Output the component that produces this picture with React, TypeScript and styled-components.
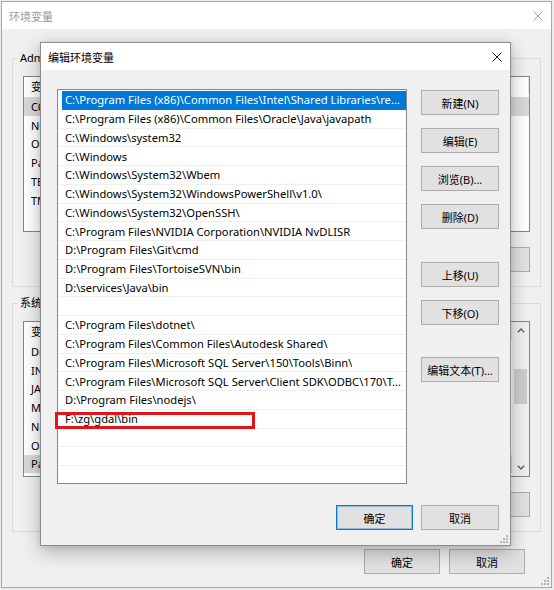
import React from "react";
import styled, { createGlobalStyle, css } from "styled-components";

const FONT = `"Noto Sans", "Noto Sans CJK SC", sans-serif`;

const GlobalStyle = createGlobalStyle`
  *, *::before, *::after { box-sizing: border-box; }
  html, body { margin: 0; padding: 0; }
  body {
    background: #ececec;
    font-family: ${FONT};
    font-size: 11px;
    color: #000;
  }
`;

const Desktop = styled.div`
  position: relative;
  width: 554px;
  height: 590px;
  overflow: hidden;
  background: #ececec;
`;

const WindowFrame = styled.div`
  position: absolute;
  display: flex;
  flex-direction: column;
  background: #f0f0f0;
`;

const BackWindow = styled(WindowFrame)`
  left: 1px;
  top: 1px;
  width: 551px;
  height: 587px;
  border: 1px solid #a8a8a8;
`;

const EditDialog = styled(WindowFrame)`
  left: 40px;
  top: 42px;
  width: 471px;
  height: 504px;
  border: 1px solid #8e8e8e;
  box-shadow: 0 6px 18px rgba(0, 0, 0, 0.28), 0 0 4px rgba(0, 0, 0, 0.1);
`;

const TitleBar = styled.div<{ $inactive?: boolean }>`
  flex: none;
  height: 27px;
  background: #fff;
  display: flex;
  align-items: center;
  justify-content: space-between;
  padding: 0 8px 0 7px;
  color: ${(p) => (p.$inactive ? "#9a9a9a" : "#000")};
  font-size: 11px;
`;

const CloseIcon = ({ color }: { color: string }) => (
  <svg width="10" height="10" viewBox="0 0 10 10">
    <path d="M0.5 0.5 L9.5 9.5 M9.5 0.5 L0.5 9.5" stroke={color} strokeWidth="1" fill="none" />
  </svg>
);

const Grip = styled.svg`
  position: absolute;
  right: 2px;
  bottom: 2px;
`;

const SizeGrip = () => (
  <Grip width="8" height="8" viewBox="0 0 8 8">
    {[
      [6, 0],
      [3, 3],
      [6, 3],
      [0, 6],
      [3, 6],
      [6, 6],
    ].map(([x, y]) => (
      <rect key={`${x}-${y}`} x={x} y={y} width="2" height="2" fill="#b4b4b4" />
    ))}
  </Grip>
);

/* ---------- buttons ---------- */

const Button = styled.button<{ $w?: number; $primary?: boolean; $gapBefore?: number }>`
  flex: none;
  width: ${(p) => p.$w ?? 78}px;
  height: 25px;
  margin: ${(p) => (p.$gapBefore ? `${p.$gapBefore}px 0 0 0` : 0)};
  padding: 0;
  background: #e1e1e1;
  border: 1px solid #adadad;
  font-family: ${FONT};
  font-size: 11px;
  color: #000;
  ${(p) =>
    p.$primary &&
    css`
      border-color: #0078d7;
      box-shadow: inset 0 0 0 1px rgba(0, 120, 215, 0.35);
    `}
`;

/* ---------- background window ---------- */

const BackBody = styled.div`
  flex: 1;
  display: flex;
  flex-direction: column;
  padding: 21px 10px 14px 10px;
`;

const GroupBox = styled.fieldset`
  margin: 0;
  min-width: 0;
  padding: 0 10px 14px 10px;
  border: 1px solid #dcdcdc;
  & + & {
    margin-top: 8px;
  }
`;

const GroupLegend = styled.legend`
  padding: 0 2px;
  margin-left: -5px;
  line-height: 16px;
  font-size: 11px;
`;

const VarList = styled.div`
  margin-top: 10px;
  height: 156px;
  background: #fff;
  border: 1px solid #828790;
  display: flex;
  overflow: hidden;
`;

const VarColumns = styled.div`
  flex: 1;
  display: flex;
  flex-direction: column;
  min-width: 0;
`;

const VarHeader = styled.div`
  flex: none;
  height: 20px;
  display: flex;
  align-items: center;
  padding-bottom: 3px;
`;

const HeaderCell = styled.div<{ $w?: number }>`
  width: ${(p) => (p.$w ? `${p.$w}px` : "auto")};
  flex: ${(p) => (p.$w ? "none" : "1")};
  padding-left: 7px;
  border-right: 1px solid #e5e5e5;
`;

const VarRow = styled.div<{ $selected?: boolean }>`
  flex: none;
  height: 18.75px;
  display: flex;
  align-items: center;
  background: ${(p) => (p.$selected ? "#d9d9d9" : "transparent")};
`;

const VarCell = styled.div<{ $w?: number }>`
  width: ${(p) => (p.$w ? `${p.$w}px` : "auto")};
  flex: ${(p) => (p.$w ? "none" : "1")};
  padding-left: 7px;
  white-space: nowrap;
  overflow: hidden;
  text-overflow: ellipsis;
`;

const Scrollbar = styled.div`
  flex: none;
  width: 17px;
  background: #f0f0f0;
  display: flex;
  flex-direction: column;
`;

const ScrollArrow = styled.div`
  flex: none;
  height: 17px;
  display: flex;
  align-items: center;
  justify-content: center;
`;

const ScrollTrack = styled.div`
  flex: 1;
  padding: 30px 2px 0 2px;
`;

const ScrollThumb = styled.div`
  height: 35px;
  background: #cdcdcd;
`;

const Chevron = ({ up }: { up?: boolean }) => (
  <svg width="8" height="5" viewBox="0 0 8 5">
    <path
      d={up ? "M0.8 4.3 L4 1.1 L7.2 4.3" : "M0.8 0.7 L4 3.9 L7.2 0.7"}
      stroke="#606060"
      strokeWidth="1.4"
      fill="none"
    />
  </svg>
);

const GroupButtons = styled.div`
  display: flex;
  justify-content: flex-end;
  gap: 8px;
  margin-top: 15px;
`;

const BackFooter = styled.div`
  display: flex;
  justify-content: flex-end;
  gap: 9px;
  margin-top: 17px;
  padding-right: 16px;
`;

/* ---------- edit dialog ---------- */

const DialogBody = styled.div`
  flex: 1;
  display: flex;
  flex-direction: column;
  padding: 19px 11px 15px 16px;
`;

const MainRow = styled.div`
  display: flex;
  gap: 14px;
  height: 395px;
`;

const ListFrame = styled.div`
  position: relative;
  flex: none;
  width: 350px;
  height: 395px;
`;

const PathList = styled.div`
  height: 100%;
  background: #fff;
  border: 1px solid #828790;
  overflow: hidden;
  padding-top: 1px;
`;

const PathRow = styled.div<{ $selected?: boolean }>`
  height: 18.75px;
  display: flex;
  align-items: center;
  padding: 0 0 0 7px;
  font-size: 11.2px;
  border-bottom: 1px solid ${(p) => (p.$selected ? "transparent" : "#efefef")};
  color: ${(p) => (p.$selected ? "#fff" : "#000")};
  background: ${(p) =>
    p.$selected ? "linear-gradient(to right, #fff 4px, #0078d7 4px)" : "#fff"};
`;

const PathText = styled.span`
  min-width: 0;
  white-space: nowrap;
  overflow: hidden;
  text-overflow: ellipsis;
`;

const Highlight = styled.div`
  position: absolute;
  left: -2px;
  top: 323px;
  width: 200px;
  height: 17px;
  border: 3px solid #e5131a;
  pointer-events: none;
`;

const ButtonColumn = styled.div`
  flex: none;
  width: 78px;
  display: flex;
  flex-direction: column;
  gap: 13px;
  padding-top: 1px;
`;

const DialogFooter = styled.div`
  display: flex;
  justify-content: flex-end;
  gap: 8px;
  margin-top: 21px;
`;

/* ---------- data ---------- */

const paths = [
  "C:\\Program Files (x86)\\Common Files\\Intel\\Shared Libraries\\redist\\intel64\\compiler",
  "C:\\Program Files (x86)\\Common Files\\Oracle\\Java\\javapath",
  "C:\\Windows\\system32",
  "C:\\Windows",
  "C:\\Windows\\System32\\Wbem",
  "C:\\Windows\\System32\\WindowsPowerShell\\v1.0\\",
  "C:\\Windows\\System32\\OpenSSH\\",
  "C:\\Program Files\\NVIDIA Corporation\\NVIDIA NvDLISR",
  "D:\\Program Files\\Git\\cmd",
  "D:\\Program Files\\TortoiseSVN\\bin",
  "D:\\services\\Java\\bin",
  "",
  "C:\\Program Files\\dotnet\\",
  "C:\\Program Files\\Common Files\\Autodesk Shared\\",
  "C:\\Program Files\\Microsoft SQL Server\\150\\Tools\\Binn\\",
  "C:\\Program Files\\Microsoft SQL Server\\Client SDK\\ODBC\\170\\Tools\\Binn\\",
  "D:\\Program Files\\nodejs\\",
  "F:\\zg\\gdal\\bin",
  "",
  "",
  "",
];

const userVars = [
  ["CONDA_HOME", "D:\\Anaconda3"],
  ["NODE_PATH", "D:\\Program Files\\nodejs\\node_global"],
  ["OneDrive", "C:\\Users\\Administrator\\OneDrive"],
  ["Path", "C:\\Users\\Administrator\\AppData\\Local\\Microsoft\\WindowsApps"],
  ["TEMP", "C:\\Users\\Administrator\\AppData\\Local\\Temp"],
  ["TMP", "C:\\Users\\Administrator\\AppData\\Local\\Temp"],
];

const systemVars = [
  ["DriverData", "C:\\Windows\\System32\\Drivers\\DriverData"],
  ["INCLUDE", "C:\\Program Files\\include"],
  ["JAVA_HOME", "D:\\services\\Java"],
  ["MAVEN_HOME", "D:\\services\\maven"],
  ["NUMBER_OF_PROCESSORS", "8"],
  ["OS", "Windows_NT"],
  ["Path", "C:\\Program Files (x86)\\Common Files\\Intel\\Shared Libraries"],
];

const VariableList = ({
  rows,
  selected,
  scroll,
}: {
  rows: string[][];
  selected: number;
  scroll?: boolean;
}) => (
  <VarList>
    <VarColumns>
      <VarHeader>
        <HeaderCell $w={150}>变量</HeaderCell>
        <HeaderCell>值</HeaderCell>
      </VarHeader>
      {rows.map(([name, value], i) => (
        <VarRow key={name} $selected={i === selected}>
          <VarCell $w={150}>{name}</VarCell>
          <VarCell>{value}</VarCell>
        </VarRow>
      ))}
    </VarColumns>
    {scroll && (
      <Scrollbar>
        <ScrollArrow>
          <Chevron up />
        </ScrollArrow>
        <ScrollTrack>
          <ScrollThumb />
        </ScrollTrack>
        <ScrollArrow>
          <Chevron />
        </ScrollArrow>
      </Scrollbar>
    )}
  </VarList>
);

export default function App() {
  return (
    <>
      <GlobalStyle />
      <Desktop>
        <BackWindow>
          <TitleBar $inactive>
            <span>环境变量</span>
            <CloseIcon color="#a0a0a0" />
          </TitleBar>
          <BackBody>
            <GroupBox>
              <GroupLegend>Administrator 的用户变量(U)</GroupLegend>
              <VariableList rows={userVars} selected={0} />
              <GroupButtons>
                <Button $w={76}>新建(N)...</Button>
                <Button $w={76}>编辑(E)...</Button>
                <Button $w={76}>删除(D)</Button>
              </GroupButtons>
            </GroupBox>
            <GroupBox>
              <GroupLegend>系统变量(S)</GroupLegend>
              <VariableList rows={systemVars} selected={6} scroll />
              <GroupButtons>
                <Button $w={76}>新建(W)...</Button>
                <Button $w={76}>编辑(I)...</Button>
                <Button $w={76}>删除(L)</Button>
              </GroupButtons>
            </GroupBox>
            <BackFooter>
              <Button $w={76}>确定</Button>
              <Button $w={76}>取消</Button>
            </BackFooter>
          </BackBody>
          <SizeGrip />
        </BackWindow>

        <EditDialog>
          <TitleBar>
            <span>编辑环境变量</span>
            <CloseIcon color="#1a1a1a" />
          </TitleBar>
          <DialogBody>
            <MainRow>
              <ListFrame>
                <PathList>
                  {paths.map((p, i) => (
                    <PathRow key={i} $selected={i === 0}>
                      <PathText>{p}</PathText>
                    </PathRow>
                  ))}
                </PathList>
                <Highlight />
              </ListFrame>
              <ButtonColumn>
                <Button>新建(N)</Button>
                <Button>编辑(E)</Button>
                <Button>浏览(B)...</Button>
                <Button>删除(D)</Button>
                <Button $gapBefore={20}>上移(U)</Button>
                <Button>下移(O)</Button>
                <Button $gapBefore={19}>编辑文本(T)...</Button>
              </ButtonColumn>
            </MainRow>
            <DialogFooter>
              <Button $w={77} $primary>
                确定
              </Button>
              <Button>取消</Button>
            </DialogFooter>
          </DialogBody>
          <SizeGrip />
        </EditDialog>
      </Desktop>
    </>
  );
}
